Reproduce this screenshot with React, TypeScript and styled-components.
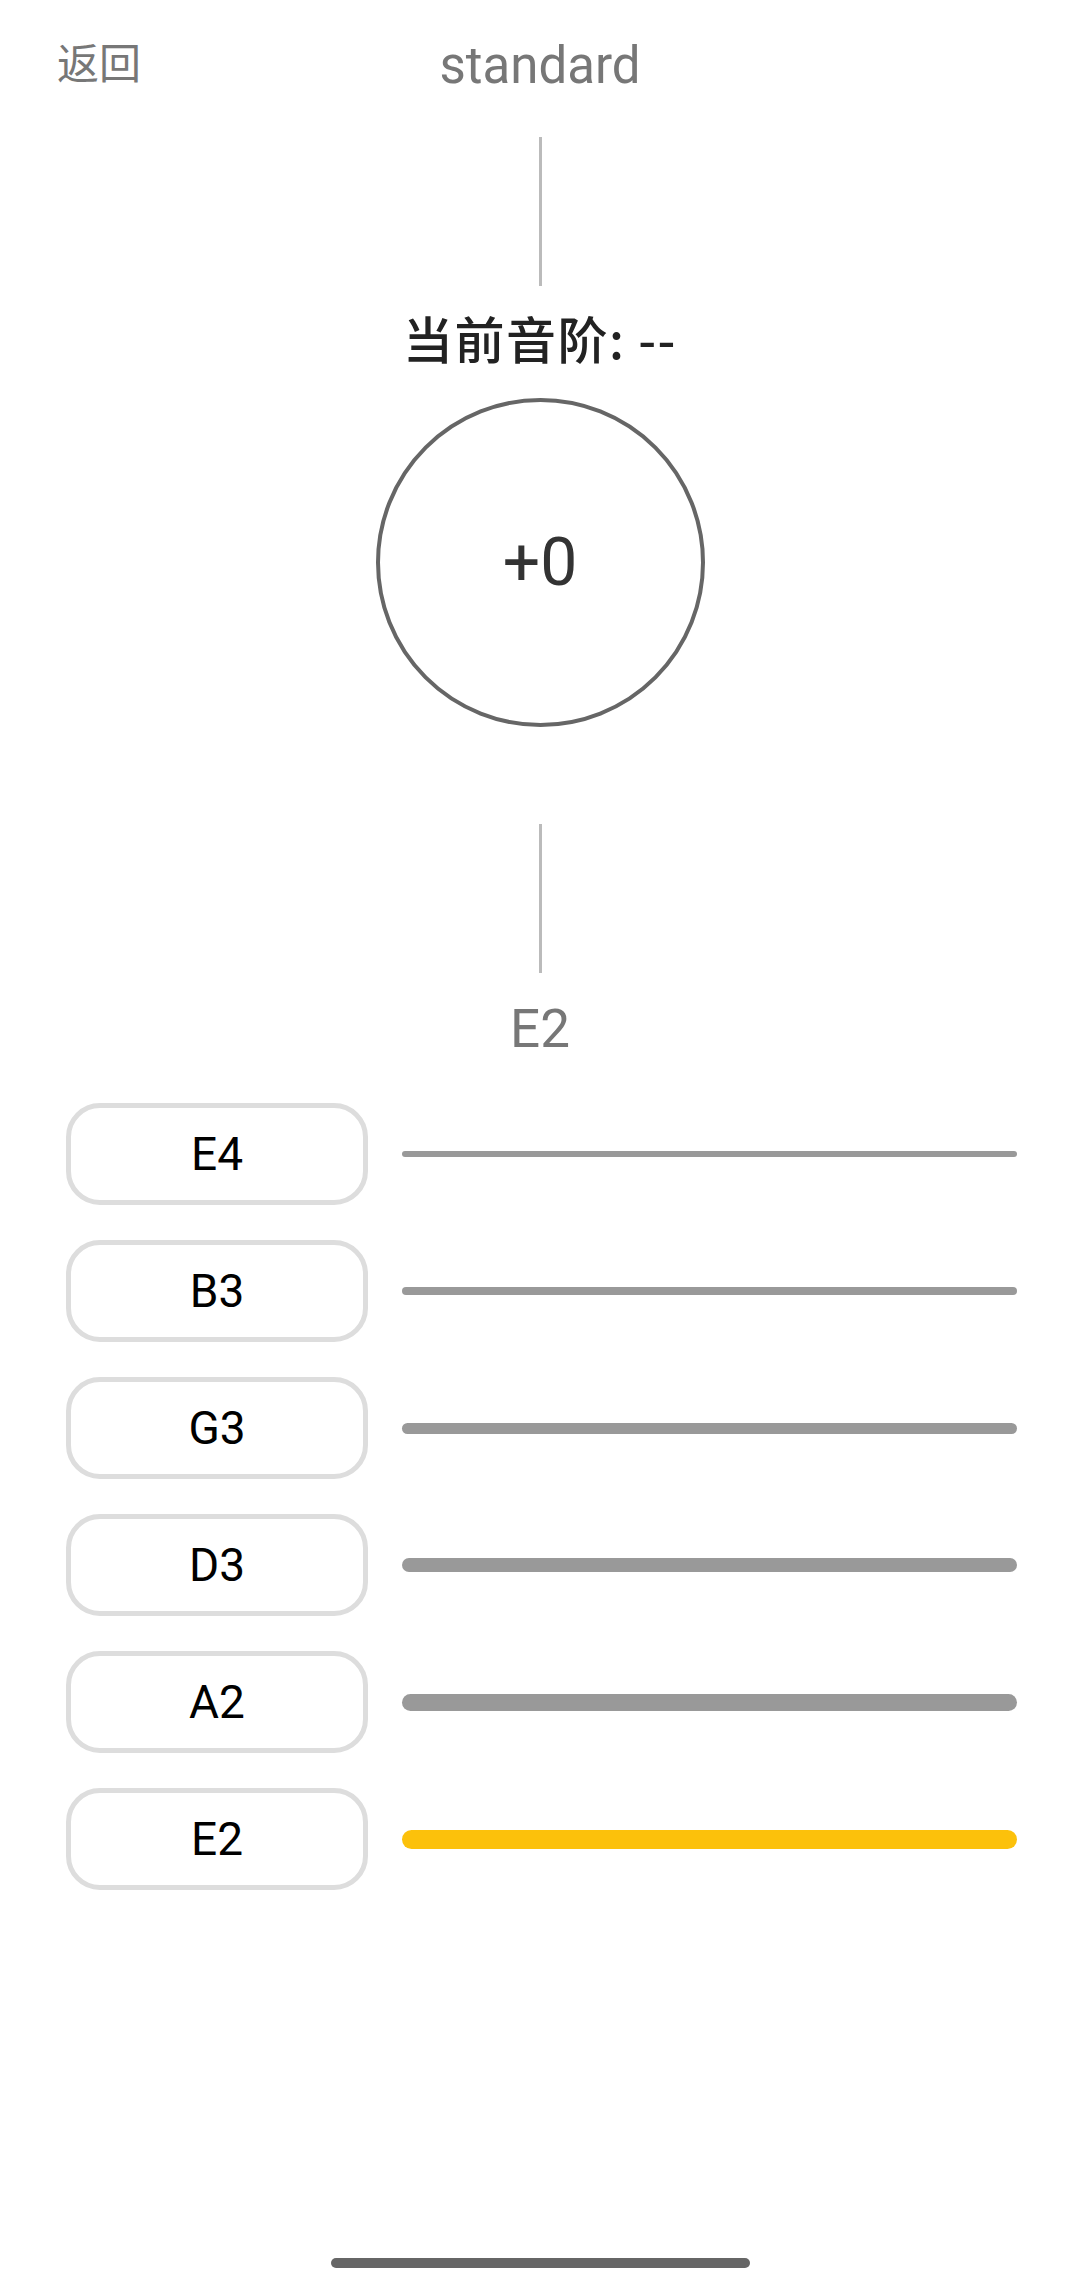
import React from 'react';
import styled, { createGlobalStyle } from 'styled-components';

const GlobalStyle = createGlobalStyle`
  html, body {
    margin: 0;
    padding: 0;
    background: #fff;
  }
  body {
    font-family: Roboto, 'Noto Sans CJK SC', sans-serif;
  }
`;

type Str = { note: string; thick: number; active?: boolean };

const strings: Str[] = [
  { note: 'E4', thick: 6 },
  { note: 'B3', thick: 8 },
  { note: 'G3', thick: 11 },
  { note: 'D3', thick: 14 },
  { note: 'A2', thick: 17 },
  { note: 'E2', thick: 19, active: true },
];

export default function App() {
  return (
    <>
      <GlobalStyle />
      <Page>
        <Header>
          <Back>返回</Back>
          <Title>standard</Title>
          <span />
        </Header>

        <Needle />
        <Current>当前音阶: --</Current>
        <Dial>+0</Dial>
        <Needle $gap={97} />
        <Target>E2</Target>

        <StringList>
          {strings.map((s) => (
            <StringRow key={s.note}>
              <NoteButton>{s.note}</NoteButton>
              <StringLine $thick={s.thick} $active={s.active} />
            </StringRow>
          ))}
        </StringList>

        <HomeBar />
      </Page>
    </>
  );
}

const Page = styled.div`
  min-height: 100vh;
  width: 100%;
  display: flex;
  flex-direction: column;
  align-items: center;
  background: #fff;
`;

const Header = styled.div`
  width: 100%;
  box-sizing: border-box;
  height: 137px;
  padding: 40px 57px 0;
  display: grid;
  grid-template-columns: 1fr auto 1fr;
  align-items: start;
`;

const Back = styled.span`
  font-family: 'Noto Sans CJK SC', sans-serif;
  font-size: 42px;
  line-height: 1;
  color: #777;
`;

const Title = styled.span`
  font-size: 51px;
  line-height: 1;
  color: #777;
`;

const Needle = styled.div<{ $gap?: number }>`
  width: 3px;
  height: 149px;
  background: #bbb;
  margin-top: ${(p) => p.$gap ?? 0}px;
`;

const Current = styled.div`
  margin-top: 26px;
  font-family: 'Noto Sans CJK SC', sans-serif;
  font-size: 50px;
  font-weight: 500;
  letter-spacing: 1.5px;
  line-height: 1;
  color: #222;
`;

const Dial = styled.div`
  margin-top: 36px;
  box-sizing: border-box;
  width: 329px;
  height: 329px;
  border: 4px solid #666;
  border-radius: 50%;
  display: flex;
  align-items: center;
  justify-content: center;
  font-size: 66px;
  line-height: 1;
  color: #333;
`;

const Target = styled.div`
  margin-top: 30px;
  font-size: 53px;
  line-height: 1;
  color: #777;
`;

const StringList = styled.div`
  margin-top: 47px;
  width: 100%;
  box-sizing: border-box;
  padding: 0 63px 0 66px;
  display: flex;
  flex-direction: column;
  gap: 35px;
`;

const StringRow = styled.div`
  display: flex;
  align-items: center;
  gap: 34px;
`;

const NoteButton = styled.div`
  box-sizing: border-box;
  width: 302px;
  height: 102px;
  flex-shrink: 0;
  border: 5px solid #ddd;
  border-radius: 34px;
  display: flex;
  align-items: center;
  justify-content: center;
  font-size: 46px;
  line-height: 1;
  color: #000;
`;

const StringLine = styled.div<{ $thick: number; $active?: boolean }>`
  flex: 1;
  height: ${(p) => p.$thick}px;
  border-radius: 20px;
  background: ${(p) => (p.$active ? '#fcc10b' : '#999')};
`;

const HomeBar = styled.div`
  margin-top: auto;
  margin-bottom: 17px;
  width: 419px;
  height: 10px;
  border-radius: 5px;
  background: #666;
`;
